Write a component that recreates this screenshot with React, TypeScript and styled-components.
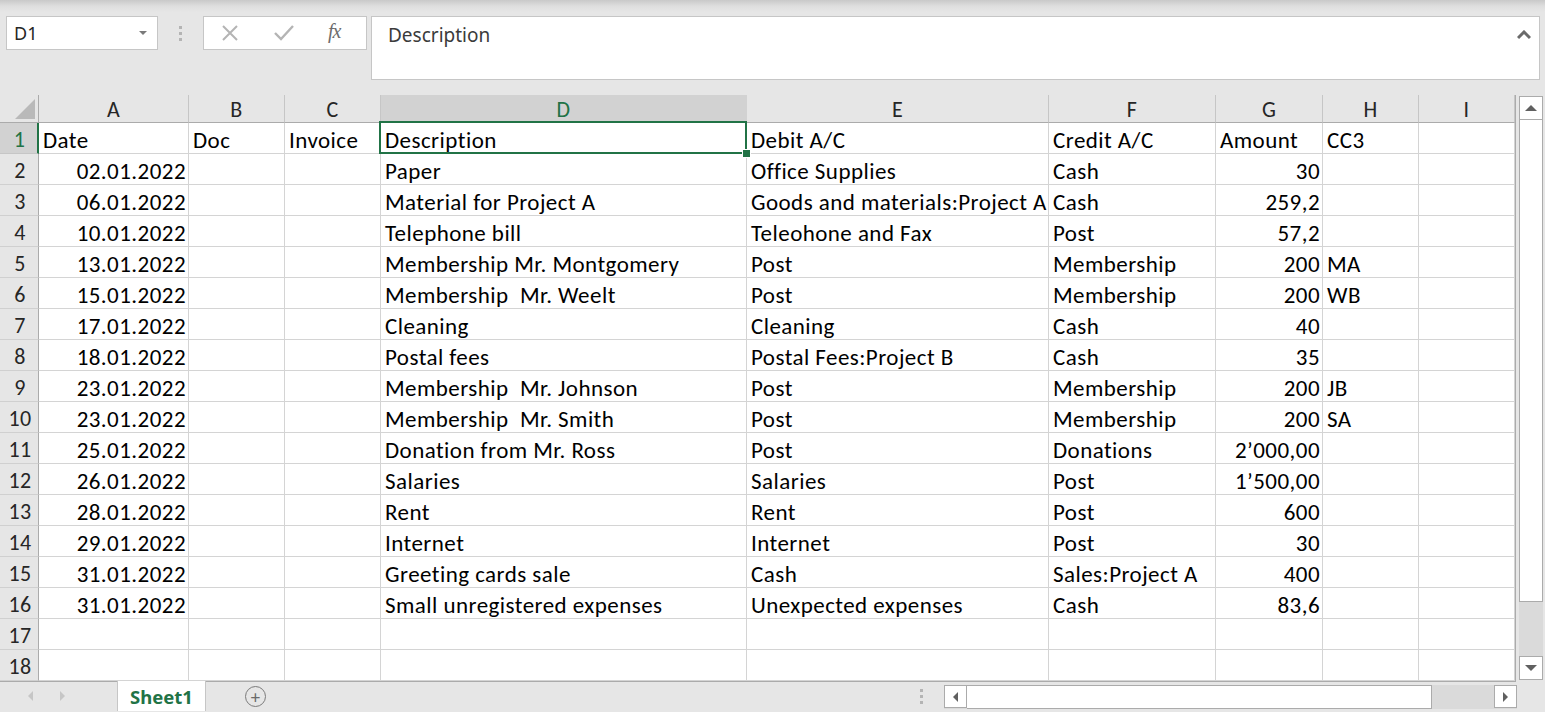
import React from "react";
import styled, { createGlobalStyle, css } from "styled-components";

const Global = createGlobalStyle`
  html, body { margin: 0; padding: 0; background: #e6e6e6; overflow: hidden; }
  * { box-sizing: border-box; }
`;

const GREEN = "#217346";
const GRID = "#d4d4d4";
const CELL_FONT = `"Carlito", "Open Sans", "Liberation Sans", sans-serif`;
const HEAD_FONT = `"Carlito", "Lato", "Liberation Sans", sans-serif`;
const UI_FONT = `"Noto Sans", "Open Sans", "Liberation Sans", sans-serif`;

const COLS = [150, 96, 96, 366, 302, 167, 107, 96, 96];
const LETTERS = ["A", "B", "C", "D", "E", "F", "G", "H", "I"];

const rows: string[][] = [
  ["Date", "Doc", "Invoice", "Description", "Debit A/C", "Credit A/C", "Amount", "CC3"],
  ["02.01.2022", "", "", "Paper", "Office Supplies", "Cash", "30", ""],
  ["06.01.2022", "", "", "Material for Project A", "Goods and materials:Project A", "Cash", "259,2", ""],
  ["10.01.2022", "", "", "Telephone bill", "Teleohone and Fax", "Post", "57,2", ""],
  ["13.01.2022", "", "", "Membership Mr. Montgomery", "Post", "Membership", "200", "MA"],
  ["15.01.2022", "", "", "Membership  Mr. Weelt", "Post", "Membership", "200", "WB"],
  ["17.01.2022", "", "", "Cleaning", "Cleaning", "Cash", "40", ""],
  ["18.01.2022", "", "", "Postal fees", "Postal Fees:Project B", "Cash", "35", ""],
  ["23.01.2022", "", "", "Membership  Mr. Johnson", "Post", "Membership", "200", "JB"],
  ["23.01.2022", "", "", "Membership  Mr. Smith", "Post", "Membership", "200", "SA"],
  ["25.01.2022", "", "", "Donation from Mr. Ross", "Post", "Donations", "2’000,00", ""],
  ["26.01.2022", "", "", "Salaries", "Salaries", "Post", "1’500,00", ""],
  ["28.01.2022", "", "", "Rent", "Rent", "Post", "600", ""],
  ["29.01.2022", "", "", "Internet", "Internet", "Post", "30", ""],
  ["31.01.2022", "", "", "Greeting cards sale", "Cash", "Sales:Project A", "400", ""],
  ["31.01.2022", "", "", "Small unregistered expenses", "Unexpected expenses", "Cash", "83,6", ""],
  ["", "", "", "", "", "", "", ""],
  ["", "", "", "", "", "", "", ""],
];

const Page = styled.div`
  width: 1545px;
  height: 712px;
  display: flex;
  flex-direction: column;
  background: #e6e6e6;
  overflow: hidden;
`;

const TopShade = styled.div`
  height: 16px;
  flex: none;
  background: linear-gradient(#c9c9c9 0px, #dedede 6px, #e6e6e6 12px);
`;

const FormulaRow = styled.div`
  height: 64px;
  flex: none;
  display: flex;
  align-items: flex-start;
  padding-left: 6px;
`;

const NameBox = styled.div`
  width: 152px;
  height: 34px;
  background: #fff;
  border: 1px solid #c6c6c6;
  display: flex;
  align-items: center;
  justify-content: space-between;
  padding: 0 10px 0 7px;
  font-family: ${UI_FONT};
  font-size: 18px;
  color: #262626;
`;

const Caret = styled.span`
  width: 0;
  height: 0;
  border-left: 4px solid transparent;
  border-right: 4px solid transparent;
  border-top: 4px solid #7a7a7a;
`;

const Grip = styled.div`
  width: 45px;
  height: 34px;
  display: flex;
  flex-direction: column;
  align-items: center;
  justify-content: center;
  gap: 3px;
  span {
    width: 3px;
    height: 3px;
    background: #b4b4b4;
  }
`;

const FxBox = styled.div`
  width: 164px;
  height: 34px;
  background: #fff;
  border: 1px solid #c6c6c6;
  display: flex;
  align-items: center;
  gap: 33px;
  padding-left: 16px;
`;

const Fx = styled.span`
  font-family: "Liberation Serif", "DejaVu Serif", serif;
  font-style: italic;
  font-size: 20px;
  color: #6d6d6d;
  letter-spacing: -1px;
  margin-top: -4px;
`;

const FormulaInput = styled.div`
  margin-left: 4px;
  width: 1169px;
  height: 64px;
  background: #fff;
  border: 1px solid #c6c6c6;
  display: flex;
  justify-content: space-between;
  align-items: flex-start;
  padding: 5px 8px 0 16px;
  font-family: ${UI_FONT};
  font-size: 19px;
  color: #3b3b3b;
  svg {
    margin-top: 8px;
  }
`;

const Main = styled.div`
  margin-top: 15px;
  display: flex;
  gap: 3px;
  height: 587px;
  flex: none;
`;

const Sheet = styled.div`
  display: grid;
  grid-template-columns: 39px ${COLS.map((c) => c + "px").join(" ")};
  grid-auto-rows: 31px;
  grid-template-rows: 28px;
  width: 1516px;
  height: 587px;
  align-content: start;
  border-right: 1px solid #ababab;
  border-bottom: 1px solid #ababab;
  background: #fff;
`;

const Corner = styled.div`
  background: #e6e6e6;
  border-right: 1px solid #ababab;
  border-bottom: 1px solid #ababab;
  position: relative;
  &::after {
    content: "";
    position: absolute;
    right: 3px;
    bottom: 3px;
    width: 0;
    height: 0;
    border-left: 20px solid transparent;
    border-bottom: 20px solid #b9b9b9;
  }
`;

const ColHead = styled.div<{ $active?: boolean }>`
  background: ${(p) => (p.$active ? "#d2d2d2" : "#e6e6e6")};
  border-right: 1px solid ${(p) => (p.$active ? "#d2d2d2" : "#c6c6c6")};
  border-bottom: ${(p) => (p.$active ? `2px solid ${GREEN}` : "1px solid #ababab")};
  display: flex;
  align-items: center;
  justify-content: center;
  padding-top: ${(p) => (p.$active ? "3px" : "2px")};
  font-family: ${HEAD_FONT};
  font-size: 22px;
  letter-spacing: 0.3px;
  color: ${(p) => (p.$active ? GREEN : "#262626")};
`;

const RowHead = styled.div<{ $active?: boolean }>`
  background: ${(p) => (p.$active ? "#d2d2d2" : "#e6e6e6")};
  border-right: ${(p) => (p.$active ? `2px solid ${GREEN}` : "1px solid #ababab")};
  border-bottom: 1px solid ${(p) => (p.$active ? "#c6c6c6" : "#d0d0d0")};
  display: flex;
  align-items: center;
  justify-content: center;
  padding-top: 3px;
  padding-left: 2px;
  font-family: ${HEAD_FONT};
  font-size: 22px;
  letter-spacing: 0.3px;
  color: ${(p) => (p.$active ? GREEN : "#262626")};
`;

const Cell = styled.div<{ $right?: boolean; $selected?: boolean }>`
  border-right: 1px solid ${GRID};
  border-bottom: 1px solid ${GRID};
  display: flex;
  align-items: center;
  justify-content: ${(p) => (p.$right ? "flex-end" : "flex-start")};
  padding: 3px 2px 0 4px;
  font-family: ${CELL_FONT};
  font-size: 23px;
  letter-spacing: 0.45px;
  color: #000;
  white-space: pre;
  overflow: ${(p) => (p.$selected ? "visible" : "hidden")};
  ${(p) =>
    p.$selected &&
    css`
      position: relative;
      &::before {
        content: "";
        position: absolute;
        left: -2px;
        top: -2px;
        right: -1px;
        bottom: -1px;
        border: 2px solid ${GREEN};
        pointer-events: none;
      }
      &::after {
        content: "";
        position: absolute;
        right: -5px;
        bottom: -5px;
        width: 7px;
        height: 7px;
        background: ${GREEN};
        border: 1px solid #fff;
      }
    `}
`;

const VScroll = styled.div`
  width: 24px;
  display: flex;
  flex-direction: column;
  background: #dadada;
  margin-top: 1px;
  height: 584px;
`;

const ScrollBtn = styled.div<{ $h?: boolean }>`
  flex: none;
  width: ${(p) => (p.$h ? "23px" : "24px")};
  height: ${(p) => (p.$h ? "23px" : "24px")};
  background: #fff;
  border: 1px solid #ababab;
  display: flex;
  align-items: center;
  justify-content: center;
`;

const Tri = styled.span<{ $dir: "up" | "down" | "left" | "right"; $color?: string }>`
  width: 0;
  height: 0;
  ${(p) => {
    const c = p.$color || "#606060";
    switch (p.$dir) {
      case "up":
        return css`border-left: 6px solid transparent; border-right: 6px solid transparent; border-bottom: 6px solid ${c};`;
      case "down":
        return css`border-left: 6px solid transparent; border-right: 6px solid transparent; border-top: 6px solid ${c};`;
      case "left":
        return css`border-top: 5px solid transparent; border-bottom: 5px solid transparent; border-right: 5px solid ${c};`;
      default:
        return css`border-top: 5px solid transparent; border-bottom: 5px solid transparent; border-left: 5px solid ${c};`;
    }
  }}
`;

const VThumb = styled.div`
  flex: none;
  height: 482px;
  background: #fff;
  border: 1px solid #ababab;
  border-top: none;
`;

const Spacer = styled.div`
  flex: 1;
`;

const BottomBar = styled.div`
  height: 30px;
  flex: none;
  display: flex;
  align-items: stretch;
  margin-top: -1px;
`;

const NavArrows = styled.div`
  width: 117px;
  display: flex;
  align-items: center;
  gap: 27px;
  padding-left: 28px;
`;

const Tab = styled.div`
  width: 89px;
  background: #fff;
  border-left: 1px solid #c6c6c6;
  border-right: 1px solid #c6c6c6;
  display: flex;
  align-items: center;
  justify-content: center;
  font-family: ${UI_FONT};
  font-weight: 700;
  font-size: 18.5px;
  color: ${GREEN};
  padding-top: 1px;
`;

const AddSheet = styled.div`
  margin-left: 39px;
  align-self: center;
  width: 21px;
  height: 21px;
  border: 1.5px solid #7a7a7a;
  border-radius: 50%;
  display: flex;
  align-items: center;
  justify-content: center;
  color: #6a6a6a;
  font-family: ${UI_FONT};
  font-size: 18px;
  line-height: 1;
  margin-top: 1px;
`;

const BottomGrip = styled.div`
  margin-left: 643px;
  width: 24px;
  display: flex;
  flex-direction: column;
  align-items: center;
  justify-content: center;
  gap: 3px;
  span {
    width: 3px;
    height: 3px;
    background: #b4b4b4;
  }
`;

const HScroll = styled.div`
  margin-left: 11px;
  margin-top: 4px;
  width: 573px;
  height: 24px;
  display: flex;
  background: #dadada;
`;

const HThumb = styled.div`
  width: 465px;
  background: #fff;
  border-top: 1px solid #ababab;
  border-bottom: 1px solid #ababab;
  border-right: 1px solid #ababab;
`;

const XIcon = () => (
  <svg width="20" height="20" viewBox="0 0 20 20">
    <path d="M3 3 L17 17 M17 3 L3 17" stroke="#b4b4b4" strokeWidth="2" fill="none" />
  </svg>
);

const CheckIcon = () => (
  <svg width="22" height="20" viewBox="0 0 22 20">
    <path d="M2 10 L8 16 L20 3" stroke="#b4b4b4" strokeWidth="2.4" fill="none" />
  </svg>
);

const CollapseIcon = () => (
  <svg width="14" height="10" viewBox="0 0 14 10">
    <path d="M1 8 L7 2 L13 8" stroke="#6a6a6a" strokeWidth="3" fill="none" />
  </svg>
);

export default function App() {
  return (
    <Page>
      <Global />
      <TopShade />
      <FormulaRow>
        <NameBox>
          <span>D1</span>
          <Caret />
        </NameBox>
        <Grip>
          <span />
          <span />
          <span />
        </Grip>
        <FxBox>
          <XIcon />
          <CheckIcon />
          <Fx>fx</Fx>
        </FxBox>
        <FormulaInput>
          <span>Description</span>
          <CollapseIcon />
        </FormulaInput>
      </FormulaRow>
      <Main>
        <Sheet>
          <Corner />
          {LETTERS.map((l) => (
            <ColHead key={l} $active={l === "D"}>
              {l}
            </ColHead>
          ))}
          {rows.map((row, ri) => (
            <React.Fragment key={ri}>
              <RowHead $active={ri === 0}>{ri + 1}</RowHead>
              {[...row, ""].map((v, ci) => {
                const right = ri > 0 && (ci === 0 || ci === 6);
                return (
                  <Cell key={ci} $right={right} $selected={ri === 0 && ci === 3}>
                    {v}
                  </Cell>
                );
              })}
            </React.Fragment>
          ))}
        </Sheet>
        <VScroll>
          <ScrollBtn>
            <Tri $dir="up" />
          </ScrollBtn>
          <VThumb />
          <Spacer />
          <ScrollBtn>
            <Tri $dir="down" />
          </ScrollBtn>
        </VScroll>
      </Main>
      <BottomBar>
        <NavArrows>
          <Tri $dir="left" $color="#c6c6c6" />
          <Tri $dir="right" $color="#c6c6c6" />
        </NavArrows>
        <Tab>Sheet1</Tab>
        <AddSheet>+</AddSheet>
        <BottomGrip>
          <span />
          <span />
          <span />
        </BottomGrip>
        <HScroll>
          <ScrollBtn $h>
            <Tri $dir="left" $color="#606060" />
          </ScrollBtn>
          <HThumb />
          <Spacer />
          <ScrollBtn $h>
            <Tri $dir="right" $color="#606060" />
          </ScrollBtn>
        </HScroll>
      </BottomBar>
    </Page>
  );
}
